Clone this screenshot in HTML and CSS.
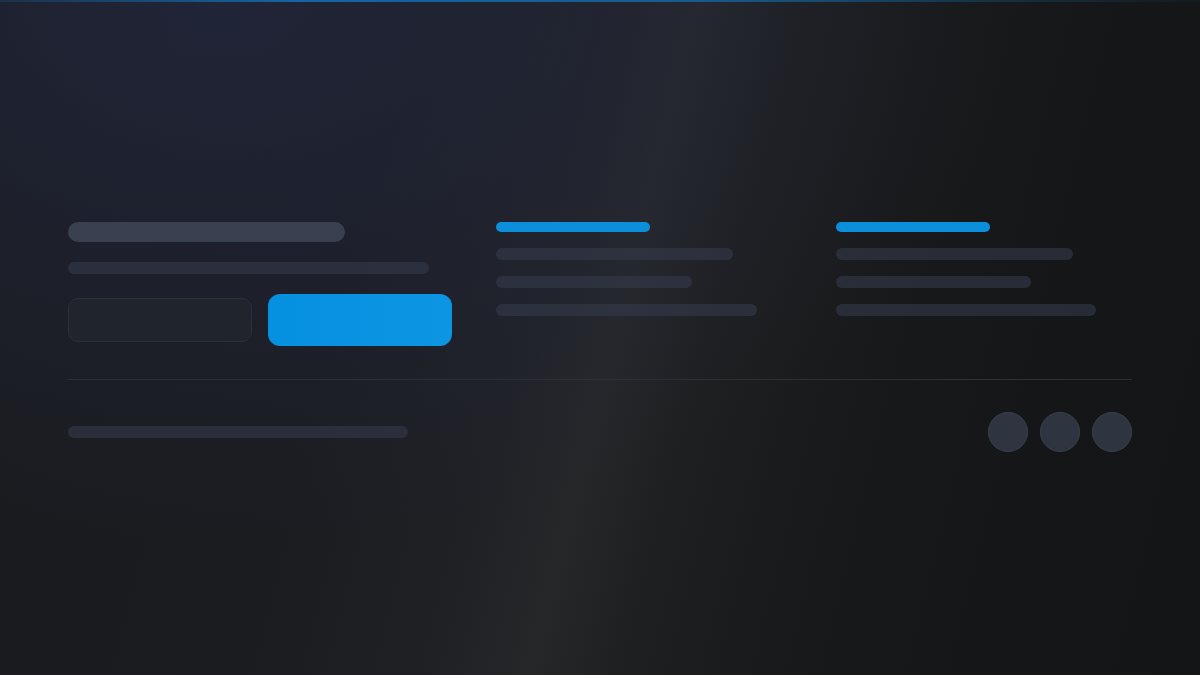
FILE: index.html
```html
<!DOCTYPE html>
<html lang="en">
<head>
<meta charset="utf-8">
<title>Footer skeleton</title>
<link rel="stylesheet" href="styles.css">
</head>
<body>
<footer class="footer">
  <div class="topline"></div>
  <div class="inner">
    <div class="grid">
      <div class="brand">
        <div class="sk sk-title"></div>
        <div class="sk sk-sub"></div>
        <div class="actions">
          <div class="btn btn-ghost"></div>
          <div class="btn btn-primary"></div>
        </div>
      </div>
      <div class="col">
        <div class="sk-head"></div>
        <div class="sk line w1"></div>
        <div class="sk line w2"></div>
        <div class="sk line w3"></div>
      </div>
      <div class="col">
        <div class="sk-head"></div>
        <div class="sk line w1"></div>
        <div class="sk line w2b"></div>
        <div class="sk line w3b"></div>
      </div>
    </div>
    <div class="divider"></div>
    <div class="bottom">
      <div class="sk line copy"></div>
      <div class="socials">
        <div class="dot"></div>
        <div class="dot"></div>
        <div class="dot"></div>
      </div>
    </div>
  </div>
</footer>
</body>
</html>
```

FILE: styles.css
```css
html, body {
  margin: 0;
  padding: 0;
  height: 100%;
  font-family: "Inter", "Liberation Sans", sans-serif;
}

.footer {
  position: relative;
  height: 675px;
  box-sizing: border-box;
  overflow: hidden;
  background:
    radial-gradient(ellipse 820px 540px at 220px 0px, rgba(35, 42, 70, 0.62) 0%, rgba(35, 42, 70, 0.32) 50%, rgba(35, 42, 70, 0) 100%),
    linear-gradient(104deg,
      #1a1b1e 0%,
      #1b1c20 30%,
      #202125 44%,
      #262729 51%,
      #1e1f20 58%,
      #18191a 70%,
      #151617 85%,
      #141516 100%);
}

.topline {
  position: absolute;
  left: 0;
  right: 0;
  top: 0;
  height: 2px;
  background: linear-gradient(90deg, rgba(14, 130, 210, 0.15) 0%, rgba(14, 130, 210, 0.7) 25%, rgba(14, 130, 210, 0.6) 55%, rgba(14, 130, 210, 0.2) 85%, rgba(14, 130, 210, 0.05) 100%);
}

.inner {
  padding: 222px 68px 0;
}

.grid {
  display: grid;
  grid-template-columns: 380px 292px 1fr;
  column-gap: 48px;
  align-items: start;
}

.sk {
  background: rgba(51, 58, 75, 0.6);
  border-radius: 999px;
}

.brand {
  display: flex;
  flex-direction: column;
}

.sk-title {
  width: 277px;
  height: 20px;
  background: #394150;
  border-radius: 10px;
}

.sk-sub {
  width: 361px;
  height: 12px;
  margin-top: 20px;
}

.actions {
  display: flex;
  align-items: center;
  gap: 16px;
  margin-top: 20px;
  height: 52px;
}

.btn {
  width: 184px;
  flex: none;
  box-sizing: border-box;
}

.btn-ghost {
  height: 44px;
  background: #1f242d;
  border: 1px solid #2b303a;
  border-radius: 10px;
}

.btn-primary {
  height: 52px;
  background: linear-gradient(90deg, #0690e0, #0b95e2);
  border-radius: 12px;
}

.col {
  display: flex;
  flex-direction: column;
  gap: 16px;
}

.sk-head {
  width: 154px;
  height: 10px;
  border-radius: 5px;
  background: #0c8fdb;
}

.line {
  height: 12px;
}

.w1 { width: 237px; }
.w2 { width: 196px; }
.w3 { width: 261px; }
.w2b { width: 195px; }
.w3b { width: 260px; }

.divider {
  height: 1px;
  margin-top: 33px;
  background: #2b2f38;
}

.bottom {
  display: flex;
  align-items: center;
  justify-content: space-between;
  margin-top: 32px;
}

.copy {
  width: 340px;
}

.socials {
  display: flex;
  gap: 12px;
}

.dot {
  width: 40px;
  height: 40px;
  box-sizing: border-box;
  border-radius: 50%;
  background: #2e3440;
  border: 1.5px solid #3a414e;
}
```
